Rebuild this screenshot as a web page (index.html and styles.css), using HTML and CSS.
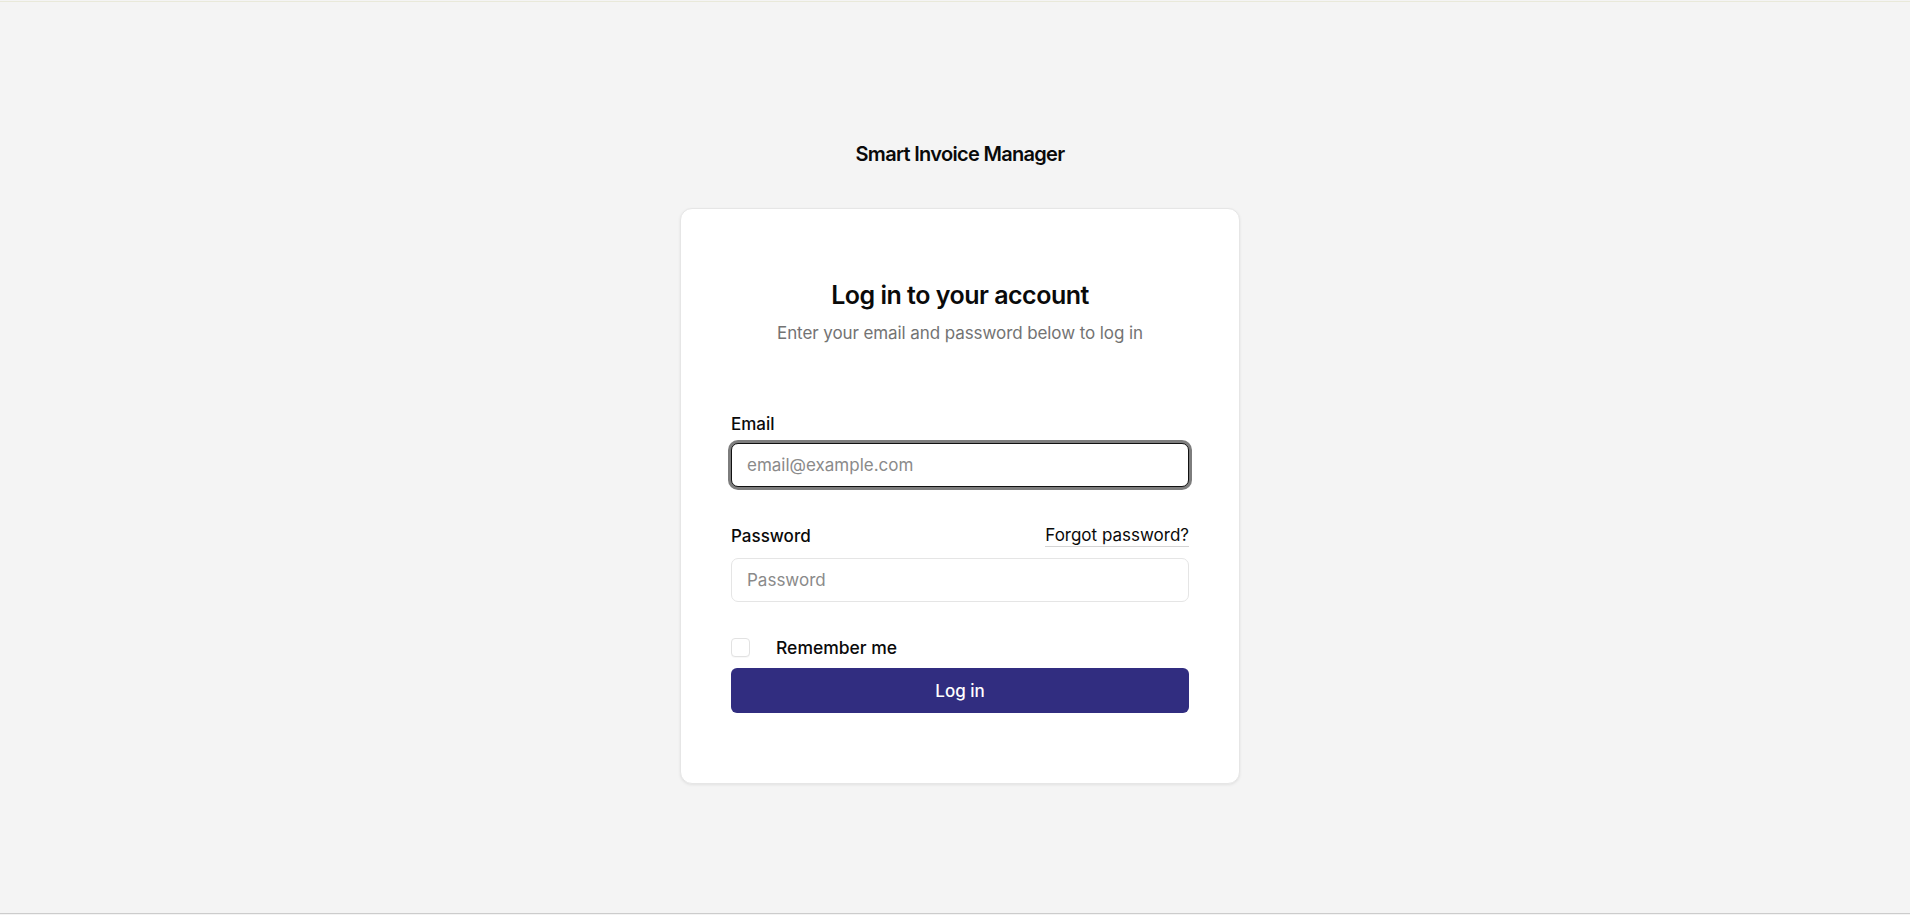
FILE: index.html
```html
<!DOCTYPE html>
<html lang="en">
<head>
<meta charset="utf-8">
<title>Log in - Smart Invoice Manager</title>
<link rel="stylesheet" href="styles.css">
</head>
<body>
<div class="page">
  <main class="auth">
    <div class="brand">Smart Invoice Manager</div>
    <section class="card">
      <header class="card-head">
        <h1 class="title">Log in to your account</h1>
        <p class="subtitle">Enter your email and password below to log in</p>
      </header>
      <form class="form">
        <div class="field">
          <label class="label" for="email">Email</label>
          <input class="input input-focus" id="email" type="email" placeholder="email@example.com">
        </div>
        <div class="field field-password">
          <div class="label-row">
            <label class="label" for="password">Password</label>
            <a class="link" href="#">Forgot password?</a>
          </div>
          <input class="input" id="password" type="password" placeholder="Password">
        </div>
        <div class="remember">
          <span class="checkbox"></span>
          <span class="remember-text">Remember me</span>
        </div>
        <button class="btn" type="button">Log in</button>
      </form>
    </section>
  </main>
</div>
</body>
</html>
```
FILE: styles.css
```css
* { box-sizing: border-box; }
html, body { margin: 0; padding: 0; }
body {
  background: #f4f4f4;
  font-family: Inter, "Noto Sans", "Liberation Sans", sans-serif;
  color: #0a0a0a;
}
.page {
  height: 915px;
  border-top: 1px solid #f4f4f4;
  position: relative;
}
.page::before {
  content: "";
  display: block;
  height: 1px;
  background: #e9e9da;
}
.page::after {
  content: "";
  position: absolute;
  left: 0; right: 0; bottom: 1px;
  height: 1px;
  background: #cccccc;
}
.auth {
  display: flex;
  flex-direction: column;
  align-items: center;
  padding-top: 138px;
  padding-left: 10px;
}
.brand {
  font-size: 20px;
  line-height: 28px;
  font-weight: 600;
  letter-spacing: -0.035em;
  color: #0a0a0a;
}
.card {
  margin-top: 40px;
  width: 560px;
  background: #fff;
  border: 1px solid #e6e6e6;
  border-radius: 12px;
  box-shadow: 0 1px 3px rgba(0,0,0,0.08);
  padding: 70px 50px 70px;
}
.card-head { text-align: center; }
.title {
  margin: 0;
  font-size: 25px;
  line-height: 32px;
  font-weight: 600;
  letter-spacing: -0.02em;
}
.subtitle {
  margin: 10px 0 0;
  font-size: 17px;
  line-height: 24px;
  color: #737373;
  letter-spacing: -0.005em;
}
.form {
  margin-top: 69px;
  display: flex;
  flex-direction: column;
}
.field { display: flex; flex-direction: column; gap: 9px; }
.field-password { margin-top: 37px; gap: 10px; }
.label {
  font-size: 17px;
  line-height: 20px;
  font-weight: 500;
  letter-spacing: 0;
}
.label-row {
  display: flex;
  justify-content: space-between;
  align-items: center;
  height: 24px;
}
.link {
  color: #0a0a0a;
  text-decoration: none;
  font-size: 17px;
  line-height: 20px;
  border-bottom: 1px solid #d4d4d4;
  padding-bottom: 1px;
  letter-spacing: 0;
}
.input {
  height: 44px;
  width: 100%;
  border: 1px solid #e5e5e5;
  border-radius: 7px;
  padding: 0 15px;
  font-family: inherit;
  font-size: 17px;
  color: #0a0a0a;
  background: #fff;
  outline: none;
}
.input::placeholder { color: #8a8a8a; }
.input-focus {
  border-color: #111;
  box-shadow: 0 0 0 3px #7d7d7d;
}
.remember {
  margin-top: 35px;
  display: flex;
  align-items: center;
  gap: 26px;
  height: 20px;
}
.checkbox {
  width: 19px;
  height: 19px;
  border: 1px solid #e2e2e2;
  border-radius: 4px;
  background: #fff;
  box-shadow: 0 1px 1px rgba(0,0,0,0.03);
}
.remember-text {
  font-size: 17.5px;
  font-weight: 500;
  letter-spacing: 0;
}
.btn {
  margin-top: 11px;
  height: 45px;
  border: none;
  border-radius: 6px;
  background: #312d80;
  color: #fff;
  font-family: inherit;
  font-size: 17px;
  font-weight: 500;
  letter-spacing: 0;
  cursor: pointer;
}
```
